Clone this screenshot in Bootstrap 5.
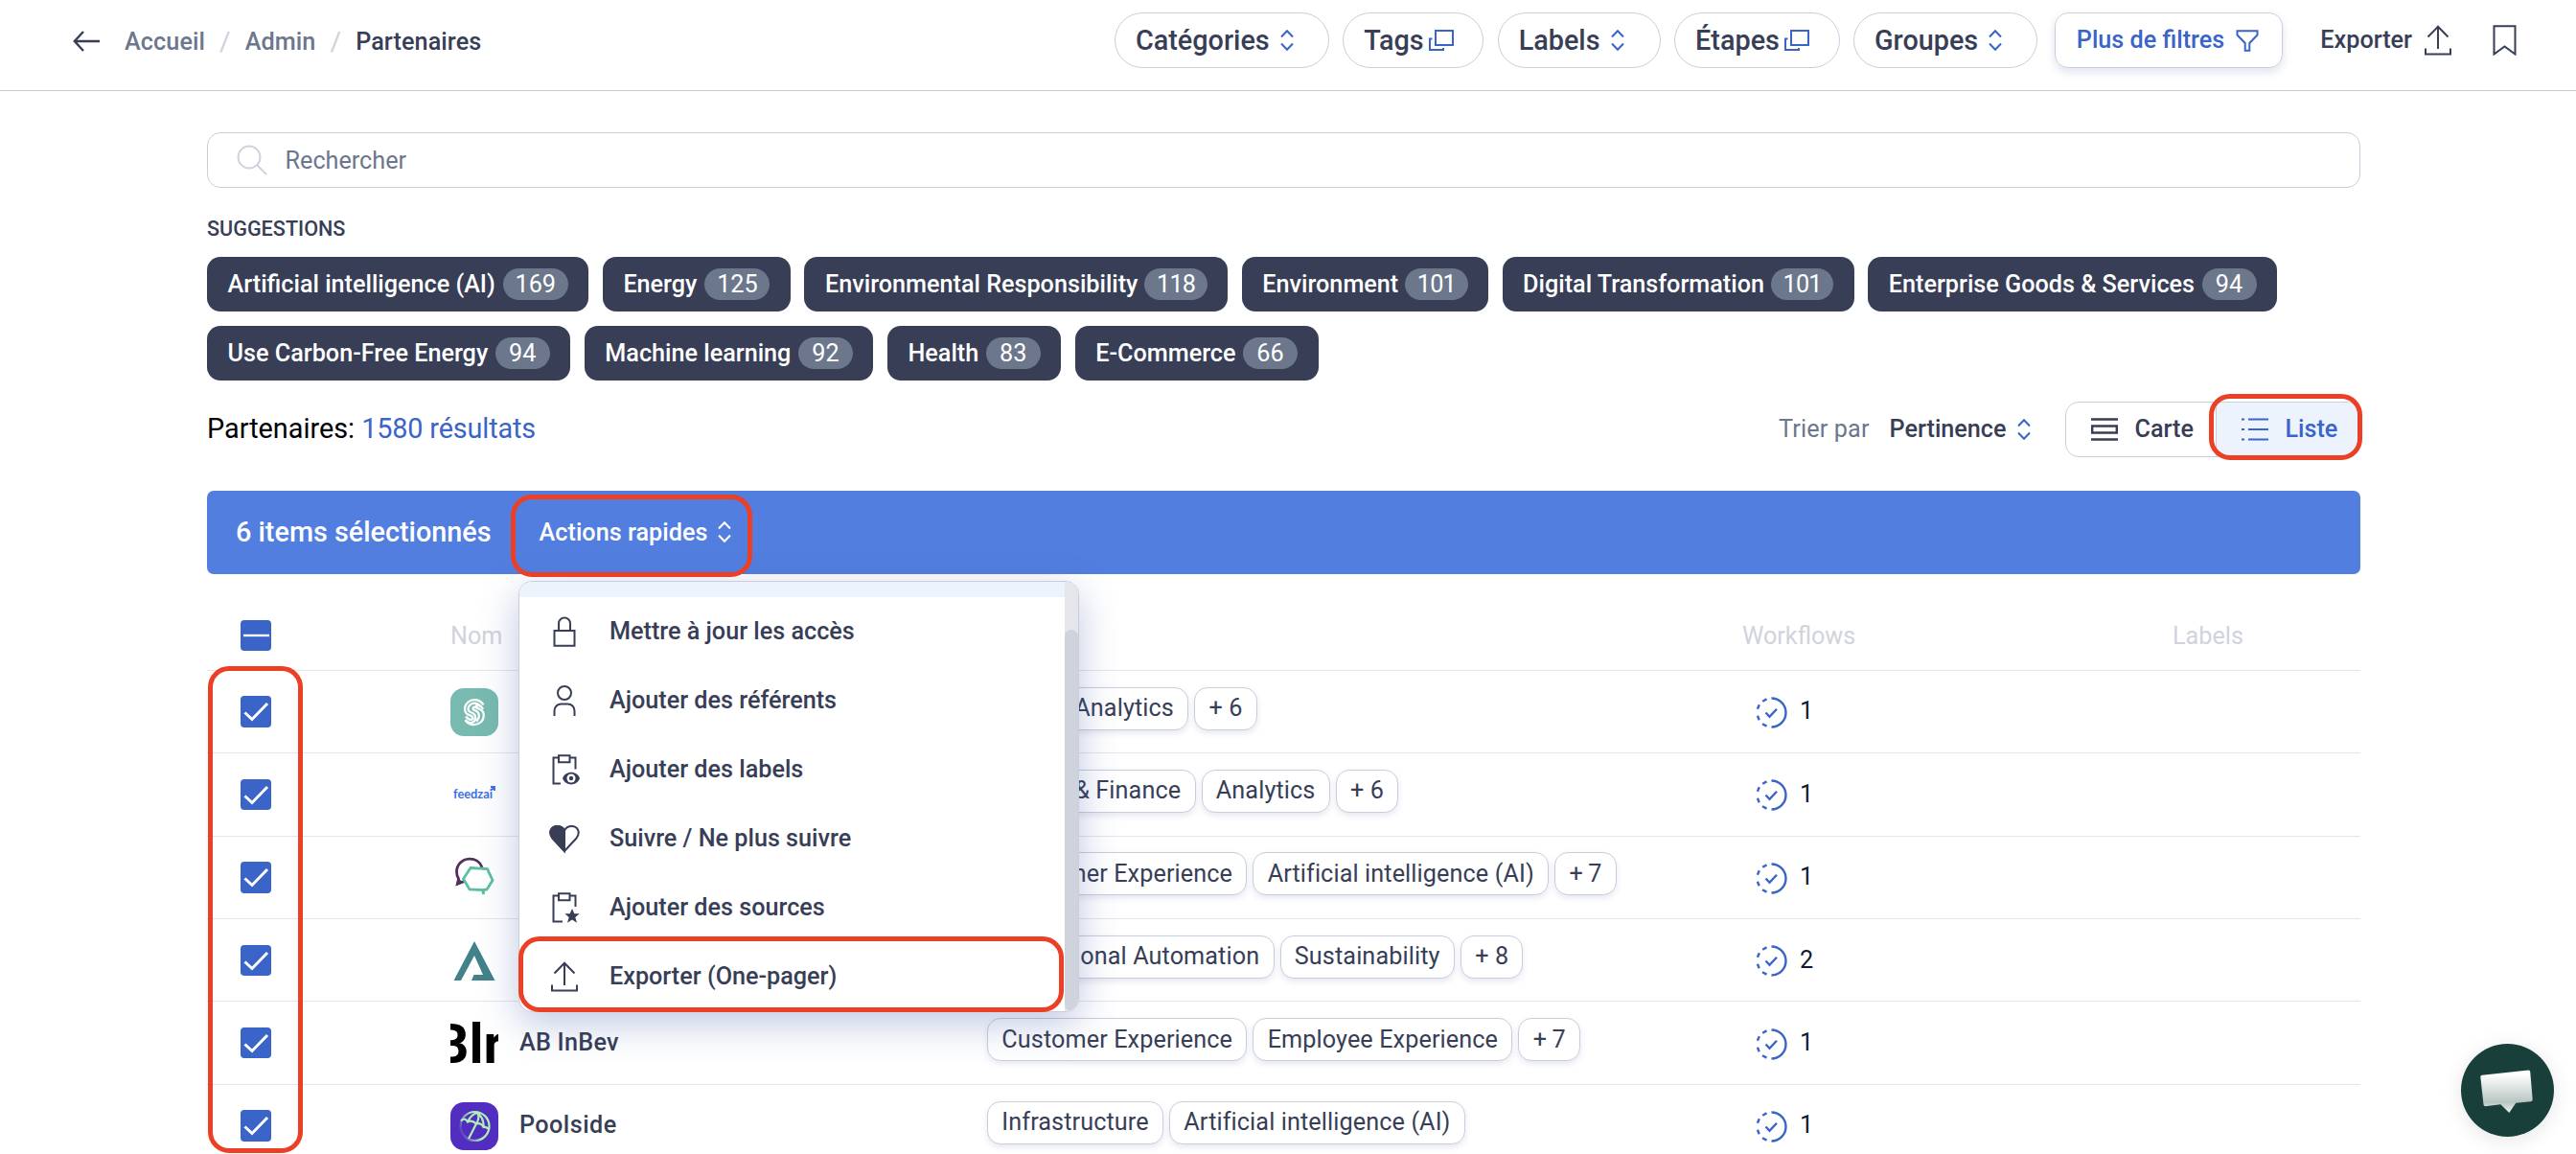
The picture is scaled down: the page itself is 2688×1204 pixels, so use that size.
<!DOCTYPE html>
<html lang="fr">
<head>
<meta charset="utf-8">
<title>Partenaires</title>
<link href="https://cdn.jsdelivr.net/npm/bootstrap@5.3.0/dist/css/bootstrap.min.css" rel="stylesheet">
<style>
:root{--ink:#373e56;--slate:#6c778d;--line:#c9cedc;--blue:#3a64c8;--pale:#ecf3fd;--faint:#d0d3dc;--red:#eb4026}
body{font-family:Roboto,"Liberation Sans",sans-serif;font-size:25.2px;line-height:1.2;color:var(--ink);height:1204px;overflow:hidden;background:#fff}
svg{display:block;flex:none;fill:none;stroke:currentColor;stroke-width:2}
.fw-m{font-weight:500}
.c-blue{color:var(--blue)}
.c-slate{color:var(--slate)}
.topbar{height:95px;border-bottom:1px solid #c5ccd8;padding:0 62px 10px 76px}
.crumbs{padding-top:1px}
.crumbs span{padding-top:3px;letter-spacing:.1px}
.crumbs svg{margin-right:26px}
.crumbs .sep{color:#cdd1da;font-size:28px;font-weight:400;margin:0 15px}
.pill{height:58px;border:1px solid var(--line);border-radius:29px;font-size:28.8px;padding-left:21px;background:#fff}
.pill .arrows{margin-left:11px}
.pill .sheets{margin-left:5.5px}
.filters{gap:14.4px}
.more-btn{height:58px;width:238px;border:1px solid var(--line);border-radius:14px;padding-left:21.5px;margin-left:3.5px;box-shadow:0 4px 10px rgba(60,80,150,.16)}
.page{width:2247px;margin-left:216px;padding-top:43px}
.search{height:58px;border:1px solid var(--line);border-radius:14px;padding-left:30px}
.sugg-title{font-size:21.6px;line-height:28px;margin:28.6px 0 15.4px}
.chips{gap:14.4px}
.chip{height:57.2px;margin-bottom:.4px;border-radius:14px;background:#373e56;color:#fff;padding:1px 21.6px 0}
.count{height:33px;width:68px;border-radius:17px;background:#6c778c;font-weight:400;padding-top:2px;margin:-1px 0 0 8px}
.count.two{width:57px;margin-left:7.5px}
.count.thin{width:65.3px;letter-spacing:-.8px;margin-left:7px}
.results{height:57.6px;margin-top:21.4px;font-size:28.8px}
.toggle{width:308px;height:57.6px;border:1px solid var(--line);border-radius:14px;font-size:25.2px}
.toggle .left{width:157px;border-right:1px solid var(--line);padding-left:26px}
.toggle .right{background:var(--pale);border-radius:0 13px 13px 0;padding-left:26px}
.toggle span{margin-left:17.5px}
.ring{position:absolute;border:5px solid var(--red);border-radius:22px;pointer-events:none}
.banner{height:87px;margin-top:35.4px;border-radius:7px;background:#527edf;color:#fff;padding-left:30px}
.banner .picked{font-size:28.8px}
.banner .quick{margin-left:50px;padding-top:1px;letter-spacing:.03px}
.thead-line{height:101px;padding-top:28px;color:var(--faint)}
.thead-line .lbl{padding-top:2px}
.line-row{height:86.4px}
.thead-line,.line-row{border-bottom:1px solid #e3e5eb}
.col-check{width:254px;padding-left:35px}
.col-name{width:560px;gap:22px}
.col-tags{width:788px;gap:6px;padding-bottom:7px}
.col-flow{width:449px}
.col-flow svg{margin:2px 13px 0 14px}
.box{width:32.4px;height:32.4px;border-radius:4px;background:var(--blue);color:#fff}
.logo{width:50px;height:50px}
.firm{letter-spacing:.25px}
.tagx{height:45px;border:1px solid var(--line);border-radius:14px;background:#fff;padding:0 14.3px;letter-spacing:.11px;white-space:nowrap;box-shadow:0 3px 6px rgba(60,80,150,.13)}
.tagx.seven{width:64.5px;letter-spacing:-.3px}
.num{color:#101a33}
.menu{position:absolute;left:541px;top:606px;width:585px;height:450px;border:1px solid var(--line);border-radius:14px;background:#fff;box-shadow:0 12px 40px rgba(60,85,165,.32);overflow:hidden}
.menu .strip{height:16px;background:var(--pale)}
.menu .entry{height:72px;padding-left:31px;gap:31px}
.menu .list{width:570px}
.menu .track{width:14px;background:#e4e6eb;padding-top:50px}
.menu .thumb{background:#cfd3dc;border-radius:7px;height:398px}
.chat{position:absolute;left:2568px;top:1089px;width:97px;height:97px;border-radius:50%;background:#183f39;box-shadow:0 4px 22px rgba(0,0,0,.10)}
</style>
<script src="https://cdn.jsdelivr.net/npm/bootstrap@5.3.0/dist/js/bootstrap.bundle.min.js"></script>
</head>
<body class="position-relative">
<svg width="0" height="0" class="position-absolute">
  <symbol id="updown" viewBox="0 0 14 22"><path d="M1 7.5 7 1.2l6 6.3M1 14.5l6 6.3 6-6.3"/></symbol>
  <symbol id="copies" viewBox="0 0 26 22"><path d="M7 1h18v15H7zM3.5 9.5H1V21h14v-2"/></symbol>
  <symbol id="upload" viewBox="0 0 28 32"><path d="M14 25V2M3.500 12.500 14 1.800l10.500 10.700M1 24.500V30.500h26V24.500"/></symbol>
  <symbol id="tick" viewBox="0 0 32 32"><path stroke-width="3" d="m4.500 17.500 7.500 7L28 8"/></symbol>
  <symbol id="flow" viewBox="0 0 33 33"><path stroke-width="2.400" d="M16.500 1.500a15 15 0 0 1 0 30M11.500 2.400 7.200 4.700M3.800 8.200 1.900 12.800M1.900 19.800l1.800 4.500M7 28.200l4.500 2.400M10.500 16.500l4 4.300 7.500-8"/></symbol>
</svg>

<header class="topbar d-flex align-items-center justify-content-between">
  <nav class="crumbs d-flex align-items-center fw-m c-slate">
    <svg width="28" height="22"><path d="M28 11H2M11 1 1.800 11 11 21" stroke="#373e56" stroke-width="2.400"/></svg>
    <span>Accueil</span><span class="sep">/</span><span>Admin</span><span class="sep">/</span><span style="color:#373e56">Partenaires</span>
  </nav>
  <div class="d-flex align-items-center fw-m">
    <div class="filters d-flex">
      <div class="pill d-flex align-items-center" style="width:224px">Catégories<svg class="c-blue arrows" width="14" height="22"><use href="#updown"/></svg></div>
      <div class="pill d-flex align-items-center" style="width:147px">Tags<svg class="c-blue sheets" width="26" height="22"><use href="#copies"/></svg></div>
      <div class="pill d-flex align-items-center" style="width:170px">Labels<svg class="c-blue arrows" width="14" height="22"><use href="#updown"/></svg></div>
      <div class="pill d-flex align-items-center" style="width:172.500px">Étapes<svg class="c-blue sheets" width="26" height="22"><use href="#copies"/></svg></div>
      <div class="pill d-flex align-items-center" style="width:192.500px">Groupes<svg class="c-blue arrows" width="14" height="22"><use href="#updown"/></svg></div>
      <div class="more-btn d-flex align-items-center c-blue">Plus de filtres<svg width="24" height="23" style="margin-left:12px"><path d="M1.500 1.200h21v4.300L14.300 14v7.800H9.700V14L1.500 5.500z"/></svg></div>
    </div>
    <span style="margin-left:39px">Exporter</span>
    <svg width="28" height="32" style="margin-left:13px"><use href="#upload"/></svg>
    <svg width="25" height="32" style="margin-left:43px"><path d="M1.500 1.200h22V30.500l-11-8-11 8z"/></svg>
  </div>
</header>

<main class="page">
  <div class="search d-flex align-items-center c-slate">
    <svg width="32" height="32" style="color:#d0d3dc"><circle cx="13" cy="13" r="11.500"/><path d="m21.500 21.500 9.500 9.500"/></svg>
    <span style="margin-left:18.500px;padding-top:2px">Rechercher</span>
  </div>
  <div class="sugg-title fw-m">SUGGESTIONS</div>
  <div class="chips d-flex flex-wrap fw-m">
    <div class="chip d-flex align-items-center">Artificial intelligence (AI)<span class="count d-flex align-items-center justify-content-center">169</span></div>
    <div class="chip d-flex align-items-center">Energy<span class="count d-flex align-items-center justify-content-center">125</span></div>
    <div class="chip d-flex align-items-center">Environmental Responsibility<span class="count thin d-flex align-items-center justify-content-center">118</span></div>
    <div class="chip d-flex align-items-center">Environment<span class="count thin d-flex align-items-center justify-content-center">101</span></div>
    <div class="chip d-flex align-items-center">Digital Transformation<span class="count thin d-flex align-items-center justify-content-center">101</span></div>
    <div class="chip d-flex align-items-center">Enterprise Goods &amp; Services<span class="count two d-flex align-items-center justify-content-center">94</span></div>
    <div class="chip d-flex align-items-center">Use Carbon-Free Energy<span class="count two d-flex align-items-center justify-content-center">94</span></div>
    <div class="chip d-flex align-items-center">Machine learning<span class="count two d-flex align-items-center justify-content-center">92</span></div>
    <div class="chip d-flex align-items-center">Health<span class="count two d-flex align-items-center justify-content-center">83</span></div>
    <div class="chip d-flex align-items-center">E-Commerce<span class="count two d-flex align-items-center justify-content-center">66</span></div>
  </div>

  <div class="results d-flex align-items-center justify-content-between">
    <div class="text-black">Partenaires: <span class="c-blue" style="letter-spacing:-.13px">1580 résultats</span></div>
    <div class="d-flex align-items-center" style="font-size:25.2px">
      <span class="c-slate" style="letter-spacing:.15px">Trier par</span><span class="fw-m" style="margin-left:21px">Pertinence</span>
      <svg class="c-blue" width="14" height="22" style="margin:0 36.500px 0 11px"><use href="#updown"/></svg>
      <div class="toggle d-flex fw-m">
        <div class="left d-flex align-items-center">
          <svg width="28" height="24"><path stroke-width="2.400" d="M0 1.500h28M0 22.500h28M1.200 8.500h25.600v7H1.200z"/></svg><span>Carte</span>
        </div>
        <div class="right d-flex align-items-center flex-fill c-blue">
          <svg width="28" height="24"><path d="M0 1.500h3M7 1.500h21M0 12h3M7 12h21M0 22.500h3M7 22.500h21"/></svg><span>Liste</span>
        </div>
      </div>
    </div>
  </div>

  <div class="banner d-flex align-items-center fw-m">
    <span class="picked">6 items sélectionnés</span>
    <span class="quick">Actions rapides</span>
    <svg width="14" height="22" style="margin-left:11px"><use href="#updown"/></svg>
  </div>

  <div class="thead-line d-flex align-items-center">
    <div class="col-check"><div class="box"><svg width="32" height="32"><path stroke-width="2.400" d="M3 16h27"/></svg></div></div>
    <div class="col-name lbl">Nom</div><div class="col-tags"></div><div class="col-flow lbl">Workflows</div><div class="lbl">Labels</div>
  </div>

  <div class="line-row d-flex align-items-center">
    <div class="col-check"><div class="box"><svg width="32" height="32"><use href="#tick"/></svg></div></div>
    <div class="col-name d-flex align-items-center">
      <svg class="logo" viewBox="0 0 50 50"><rect width="50" height="50" rx="14" fill="#78bab0" stroke="none"/><g stroke="#fff" stroke-width="2.300"><path d="M34.500 17.500C31 11.500 23 10.500 18.500 14.500 13 19.500 14.500 26.500 20 28.200c4.500 1.400 4.200 5.300.5 4.600-2-.5-3-1.800-4.500-3.300M31.500 19.500c-3-4.500-8.500-5-11.500-1.500s-1.500 6.500 2 7.500c5.500 1.500 5.500 9 0 10.500-3 .5-5-1-6.500-3M15.500 33.500c3.500 5.500 11.500 6 16 2s4.500-11.500-1-13.500c-4.500-1.500-4-5-1-4.500 2 .5 3.500 2.500 4.500 4.500M28 21c-1.500-2-4.500-1.500-4.500.5 0 1 1 1.300 2 1.700 5.500 2 5.500 8 1.500 11.300"/></g></svg>
    </div>
    <div class="col-tags d-flex"><span class="tagx d-flex align-items-center" style="width:70px">B2B</span><span class="tagx d-flex align-items-center">Analytics</span><span class="tagx d-flex align-items-center">+ 6</span></div>
    <div class="col-flow d-flex align-items-center"><svg class="c-blue" width="33" height="33"><use href="#flow"/></svg><span class="num">1</span></div>
  </div>

  <div class="line-row d-flex align-items-center">
    <div class="col-check"><div class="box"><svg width="32" height="32"><use href="#tick"/></svg></div></div>
    <div class="col-name d-flex align-items-center">
      <svg class="logo" viewBox="0 0 50 50"><text x="3" y="28.500" font-family="Lato" font-weight="700" font-size="12.800" textLength="41" fill="#3a6fe8" stroke="none">feedzai</text><path d="M42 17h4v4M45.500 17.500l-3.500 3.200" stroke="#3a6fe8" stroke-width="1.800"/></svg>
    </div>
    <div class="col-tags d-flex"><span class="tagx d-flex align-items-center justify-content-end" style="width:217.500px">Bank &amp; Finance</span><span class="tagx d-flex align-items-center">Analytics</span><span class="tagx d-flex align-items-center">+ 6</span></div>
    <div class="col-flow d-flex align-items-center"><svg class="c-blue" width="33" height="33"><use href="#flow"/></svg><span class="num">1</span></div>
  </div>

  <div class="line-row d-flex align-items-center">
    <div class="col-check"><div class="box"><svg width="32" height="32"><use href="#tick"/></svg></div></div>
    <div class="col-name d-flex align-items-center">
      <svg class="logo" viewBox="0 0 50 50"><path d="M33 15C31 9 25.500 6 19.500 6.200 12 6.500 6.500 12.500 6.500 19.500c0 3 .8 5.500 2 7.300L7.500 32l7-2.500" stroke="#53305a" stroke-width="2.800"/><path d="M5.300 34.500 8 26l5.500 5z" fill="#53305a" stroke="none"/><path d="m21 15.500 17.500 1 5.500 12-6 9.500-3.500.5v4.500l-.8-4.500-13.700-.5L13.500 27z" stroke="#5bbfa2" stroke-width="2.800"/></svg>
    </div>
    <div class="col-tags d-flex"><span class="tagx d-flex align-items-center">Customer Experience</span><span class="tagx d-flex align-items-center">Artificial intelligence (AI)</span><span class="tagx seven d-flex align-items-center">+ 7</span></div>
    <div class="col-flow d-flex align-items-center"><svg class="c-blue" width="33" height="33"><use href="#flow"/></svg><span class="num">1</span></div>
  </div>

  <div class="line-row d-flex align-items-center">
    <div class="col-check"><div class="box"><svg width="32" height="32"><use href="#tick"/></svg></div></div>
    <div class="col-name d-flex align-items-center">
      <svg class="logo" viewBox="0 0 50 50"><path d="M25 5 46.500 46H22l2.500-6H34L25 20 11 46H3.500z" fill="#43828a" stroke="none"/></svg>
    </div>
    <div class="col-tags d-flex"><span class="tagx d-flex align-items-center justify-content-end" style="width:299.500px">Operational Automation</span><span class="tagx d-flex align-items-center">Sustainability</span><span class="tagx d-flex align-items-center">+ 8</span></div>
    <div class="col-flow d-flex align-items-center"><svg class="c-blue" width="33" height="33"><use href="#flow"/></svg><span class="num">2</span></div>
  </div>

  <div class="line-row d-flex align-items-center">
    <div class="col-check"><div class="box"><svg width="32" height="32"><use href="#tick"/></svg></div></div>
    <div class="col-name d-flex align-items-center">
      <svg class="logo overflow-hidden" viewBox="0 0 50 50"><text x="-17" y="45.500" font-weight="700" font-size="57" fill="#000" stroke="none">Blr</text></svg>
      <span class="fw-m firm">AB InBev</span>
    </div>
    <div class="col-tags d-flex"><span class="tagx d-flex align-items-center">Customer Experience</span><span class="tagx d-flex align-items-center">Employee Experience</span><span class="tagx seven d-flex align-items-center">+ 7</span></div>
    <div class="col-flow d-flex align-items-center"><svg class="c-blue" width="33" height="33"><use href="#flow"/></svg><span class="num">1</span></div>
  </div>

  <div class="line-row d-flex align-items-center">
    <div class="col-check"><div class="box"><svg width="32" height="32"><use href="#tick"/></svg></div></div>
    <div class="col-name d-flex align-items-center">
      <svg class="logo" viewBox="0 0 50 50"><defs><linearGradient id="fade" x1="0" y1=".6" x2=".5" y2=".4"><stop offset="0" stop-color="#b0efb4" stop-opacity=".15"/><stop offset="1" stop-color="#b0efb4"/></linearGradient></defs><rect width="50" height="50" rx="14" fill="#512dc0" stroke="none"/><circle cx="25.500" cy="25" r="15" stroke="url(#fade)" stroke-width="2.200"/><path d="M11 19.500c3-3 5.500-2 7 1 2.500-1.500 6-1 9 2 3-1 6 .5 7.500 3.500 2-.5 4 .5 5 2M18 20.500c2-5 5.500-8.500 10.500-9.500 1.500 4 1 8-1.500 11.500M28.500 11c4 3.500 6.500 9 6 15M27 22.500 19 38" stroke="#b0efb4" stroke-width="2.200"/></svg>
      <span class="fw-m" style="letter-spacing:.45px">Poolside</span>
    </div>
    <div class="col-tags d-flex"><span class="tagx d-flex align-items-center">Infrastructure</span><span class="tagx d-flex align-items-center">Artificial intelligence (AI)</span></div>
    <div class="col-flow d-flex align-items-center"><svg class="c-blue" width="33" height="33"><use href="#flow"/></svg><span class="num">1</span></div>
  </div>
</main>

<div class="menu d-flex fw-m">
  <div class="list">
    <div class="strip"></div>
    <div class="entry d-flex align-items-center"><svg width="32" height="32"><path d="M5.500 15h21v15.800h-21zM10 15V7.500a6 6 0 0 1 12 0V15"/></svg>Mettre à jour les accès</div>
    <div class="entry d-flex align-items-center"><svg width="32" height="32"><circle cx="16" cy="8" r="7"/><path d="M5.500 32v-5.500a7 7 0 0 1 7-7h7a7 7 0 0 1 7 7V32"/></svg>Ajouter des référents</div>
    <div class="entry d-flex align-items-center"><svg width="32" height="32"><path d="M9.500 3.500H4.500V30.500H12M21.500 3.500h6V15.500M10 1.200h11.500v7H10z"/><path d="M14 25c3-8.500 15-8.500 18 0-3 8.500-15 8.500-18 0z" fill="currentColor" stroke="none"/><circle cx="23" cy="25" r="4.500" fill="#fff" stroke="none"/><circle cx="23" cy="25" r="2.200" fill="currentColor" stroke="none"/></svg>Ajouter des labels</div>
    <div class="entry d-flex align-items-center"><svg width="32" height="32"><path d="M16 29 3.500 15.500C-1 9.500 2 3 8.500 3 12 3 14.500 4.500 16 7.500 17.500 4.500 20 3 23.500 3c6.500 0 9.500 6.500 5 12.500z"/><path d="M16 29 3.500 15.500C-1 9.500 2 3 8.500 3 12 3 14.500 4.500 16 7.500z" fill="currentColor"/></svg>Suivre / Ne plus suivre</div>
    <div class="entry d-flex align-items-center"><svg width="32" height="32"><path d="M9.500 3.500H4.500V30.500H14M21.500 3.500h6V15M10 1.200h11.500v7H10z"/><path d="m24 17 2.300 5.300h5.400l-4.400 3.700 1.700 5.800-5-3.400-5 3.400 1.700-5.800-4.400-3.700h5.400z" fill="currentColor" stroke="none"/></svg>Ajouter des sources</div>
    <div class="entry d-flex align-items-center"><svg width="32" height="32" viewBox="-2 0 32 32"><use href="#upload" width="28" height="32"/></svg>Exporter (One-pager)</div>
  </div>
  <div class="track"><div class="thumb"></div></div>
</div>

<div class="ring" style="left:2305px;top:411px;width:160px;height:69px"></div>
<div class="ring" style="left:533px;top:516px;width:252px;height:86px"></div>
<div class="ring" style="left:217px;top:695px;width:99px;height:508px"></div>
<div class="ring" style="left:541px;top:977px;width:569px;height:79px"></div>

<div class="chat">
  <svg width="97" height="97"><defs><linearGradient id="glow" x1="0" y1="0" x2="0" y2="1"><stop offset="0.100" stop-color="#fff"/><stop offset=".75" stop-color="#b9c5c2"/><stop offset="1" stop-color="#eef1f0"/></linearGradient></defs><path d="M22 32.800 70.500 27.500q1.500 0 1.700 1.500L74.700 58q0 2-1.700 2.200L57.300 61.800 50.300 72l-9-8.700-15.800 1.900q-1.800 0-2-1.800L20.300 34.500q0-1.500 1.700-1.700z" fill="url(#glow)" stroke="none"/></svg>
</div>
</body>
</html>
